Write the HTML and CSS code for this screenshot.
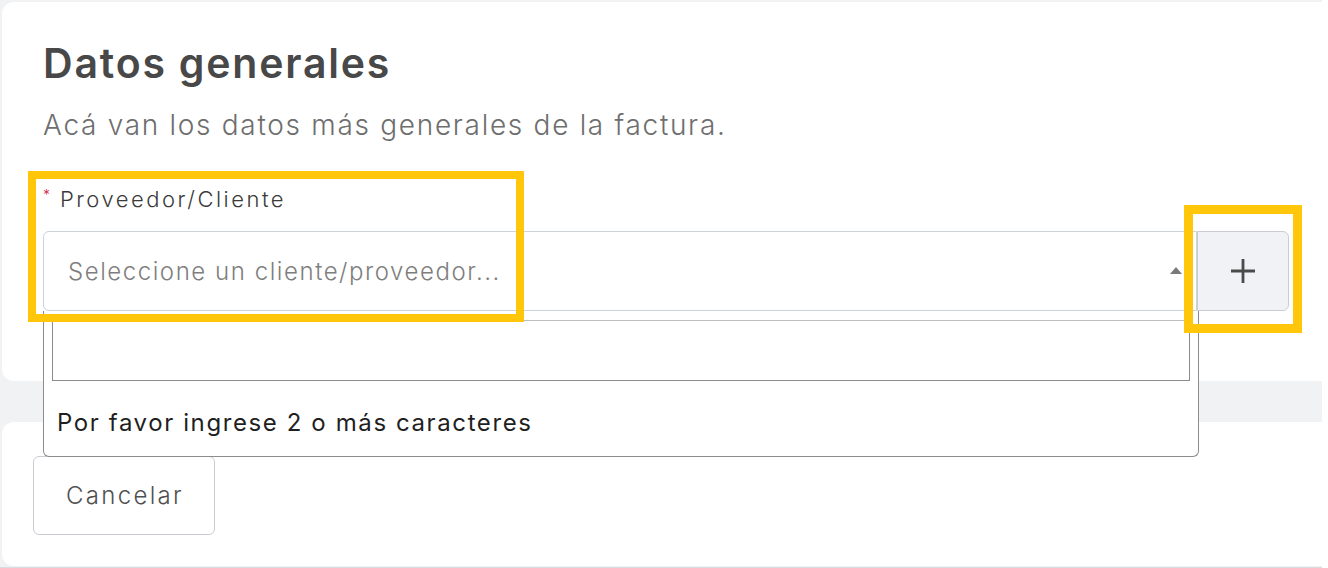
FILE: index.html
```html
<!DOCTYPE html>
<html lang="es">
<head>
<meta charset="utf-8">
<title>Datos generales</title>
<link rel="stylesheet" href="styles.css">
</head>
<body>
<div class="page">
  <section class="card card-main">
    <h1 class="title">Datos generales</h1>
    <p class="subtitle">Acá van los datos más generales de la factura.</p>
    <div class="form-item">
      <label class="label"><span class="req">*</span>Proveedor/Cliente</label>
      <div class="field-row">
        <div class="select">
          <span class="placeholder">Seleccione un cliente/proveedor...</span>
          <span class="arrow"></span>
        </div>
        <button class="add-btn" type="button" aria-label="Agregar">
          <svg width="28" height="28" viewBox="0 0 28 28"><path d="M14 2v24M2 14h24" stroke="#4a4a4a" stroke-width="2.8" fill="none"/></svg>
        </button>
        <div class="dropdown">
          <div class="search"></div>
          <div class="message">Por favor ingrese 2 o más caracteres</div>
        </div>
      </div>
    </div>
  </section>
  <section class="card card-actions">
    <button class="btn-cancel" type="button">Cancelar</button>
  </section>
  <div class="highlight hl-1"></div>
  <div class="highlight hl-2"></div>
</div>
</body>
</html>
```
FILE: styles.css
```css
* { box-sizing: border-box; }
html, body { margin: 0; padding: 0; background: #ffffff; }
body { font-family: "Inter", "Noto Sans", sans-serif; }

.page {
  position: relative;
  width: 1322px;
  height: 568px;
  background: #f1f2f4;
  padding: 2px 0 0 2px;
  border-bottom: 1px solid #d9dcdf;
}

.card {
  background: #ffffff;
  border-radius: 12px 0 0 12px;
}

.card-main {
  padding: 37px 33px 70px 41px;
}

.title {
  margin: 0;
  font-size: 41px;
  line-height: 48px;
  font-weight: 600;
  color: #484848;
  letter-spacing: 1.8px;
}

.subtitle {
  margin: 20px 0 0;
  font-size: 28px;
  line-height: 36px;
  font-weight: 300;
  color: #6e6e6e;
  letter-spacing: 1.7px;
}

.form-item { margin-top: 42px; }

.label {
  display: block;
  font-size: 22px;
  line-height: 28px;
  font-weight: 300;
  color: #3a3a3a;
  letter-spacing: 2.5px;
}
.req {
  color: #d0284a;
  font-size: 14px;
  vertical-align: top;
  margin-right: 10px;
  position: relative;
  top: -4px;
  letter-spacing: 0;
}

.field-row {
  position: relative;
  display: flex;
  margin-top: 18px;
  height: 80px;
}

.select {
  flex: 1;
  display: flex;
  align-items: center;
  justify-content: space-between;
  border: 1px solid #cdd2d7;
  border-radius: 6px 0 0 6px;
  padding: 0 14px 0 24px;
  background: #fff;
}
.placeholder {
  font-size: 24px;
  font-weight: 300;
  color: #7e7e7e;
  letter-spacing: 1.55px;
}
.arrow {
  width: 0;
  height: 0;
  border-left: 6px solid transparent;
  border-right: 6px solid transparent;
  border-bottom: 7px solid #7a7a7a;
  margin-top: -2px;
}

.add-btn {
  width: 92px;
  height: 80px;
  border: 1px solid #c9cdd2;
  border-radius: 0 6px 6px 0;
  background: #f0f2f5;
  display: flex;
  align-items: center;
  justify-content: center;
  padding: 0;
}

.dropdown {
  position: absolute;
  top: 100%;
  left: 0;
  width: 1156px;
  height: 146px;
  background: #fff;
  border: 1px solid #8c8c8c;
  border-top: none;
  border-radius: 0 0 6px 6px;
  padding: 9px 8px 0;
  z-index: 2;
}
.search {
  height: 61px;
  border: 1px solid #8c8c8c;
  border-top-color: #bfbfbf;
}
.message {
  padding: 28px 0 0 5px;
  font-size: 24px;
  line-height: 28px;
  color: #1f1f1f;
  letter-spacing: 1.6px;
}

.card-actions {
  margin-top: 41px;
  height: 144px;
  padding: 34px 0 0 31px;
}
.btn-cancel {
  width: 182px;
  height: 79px;
  border: 1px solid #c9cdd2;
  border-radius: 6px;
  background: #fff;
  font-family: "Inter", "Noto Sans", sans-serif;
  font-size: 24px;
  font-weight: 300;
  color: #505050;
  letter-spacing: 2.3px;
  padding: 0 0 0 2px;
}

.highlight {
  position: absolute;
  border-style: solid;
  border-color: #ffc60a;
  z-index: 3;
}
.hl-1 { left: 28px; top: 171px; width: 496px; height: 151px; border-width: 8px; }
.hl-2 { left: 1184px; top: 205px; width: 118px; height: 128px; border-width: 9px; }
```
